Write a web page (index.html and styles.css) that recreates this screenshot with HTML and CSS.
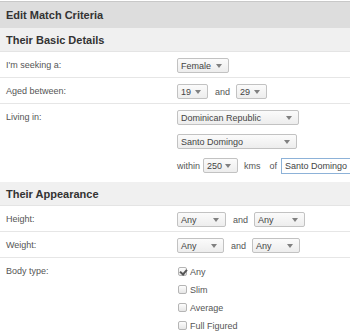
FILE: index.html
```html
<!DOCTYPE html>
<html lang="en">
<head>
    <meta charset="UTF-8">
    <title>Edit Match Criteria</title>
    <link rel="stylesheet" href="styles.css">
</head>
<body>
    <div class="panel">
        <div class="panel-title">Edit Match Criteria</div>

        <div class="section-title">Their Basic Details</div>
        <div class="row">
            <div class="label">I'm seeking a:</div>
            <div class="field">
                <div class="line"><span class="select w-female">Female</span></div>
            </div>
        </div>
        <div class="row">
            <div class="label">Aged between:</div>
            <div class="field">
                <div class="line">
                    <span class="select w-age">19</span>
                    <span class="word">and</span>
                    <span class="select w-age">29</span>
                </div>
            </div>
        </div>
        <div class="row row-last">
            <div class="label">Living in:</div>
            <div class="field">
                <div class="line"><span class="select w-country">Dominican Republic</span></div>
                <div class="line"><span class="select w-city">Santo Domingo</span></div>
                <div class="line">
                    <span class="word">within</span>
                    <span class="select w-dist">250</span>
                    <span class="word kms">kms</span>
                    <span class="word of">of</span>
                    <span class="text-input">Santo Domingo</span>
                </div>
            </div>
        </div>

        <div class="section-title">Their Appearance</div>
        <div class="row">
            <div class="label">Height:</div>
            <div class="field">
                <div class="line">
                    <span class="select w-any">Any</span>
                    <span class="word">and</span>
                    <span class="select w-any2">Any</span>
                </div>
            </div>
        </div>
        <div class="row">
            <div class="label">Weight:</div>
            <div class="field">
                <div class="line">
                    <span class="select w-any3">Any</span>
                    <span class="word">and</span>
                    <span class="select w-any4">Any</span>
                </div>
            </div>
        </div>
        <div class="row row-last">
            <div class="label">Body type:</div>
            <div class="field checks">
                <div class="check-item"><span class="checkbox checked"></span>Any</div>
                <div class="check-item"><span class="checkbox"></span>Slim</div>
                <div class="check-item"><span class="checkbox"></span>Average</div>
                <div class="check-item"><span class="checkbox"></span>Full Figured</div>
            </div>
        </div>
    </div>
</body>
</html>
```

FILE: styles.css
```css
* { margin: 0; padding: 0; box-sizing: border-box; }
body {
    font-family: "Liberation Sans", Arial, sans-serif;
    font-size: 9px;
    color: #555;
    background: white;
    overflow: hidden;
}
.panel { margin-top: 1px; border-top: 1px solid #c8c8c8; overflow: hidden; }
.panel-title {
    background: #dddddd;
    height: 26px;
    line-height: 26px;
    padding-left: 6px;
    font-size: 11px;
    font-weight: bold;
    color: #333;
}
.section-title {
    background: #f0f0f0;
    height: 24px;
    line-height: 24px;
    padding-left: 6px;
    font-size: 11px;
    font-weight: bold;
    color: #333;
    border-bottom: 1px solid #e4e4e4;
}
.row {
    display: flex;
    padding: 6px 0 4px 6px;
    border-bottom: 1px solid #e6e6e6;
}
.row-last { border-bottom: none; padding-bottom: 9px; }
.label { width: 171px; line-height: 15px; flex-shrink: 0; }
.field { display: flex; flex-direction: column; gap: 9px; min-width: 0; }
.line { display: flex; align-items: center; height: 15px; white-space: nowrap; }
.word { color: #555; margin: 0 6px 0 7px; }
.line .word:first-child { margin-left: 0; margin-right: 3px; }
.kms { margin: 0 0 0 6px; }
.of { margin: 0 4px 0 9px; }
.select {
    display: inline-flex;
    align-items: center;
    justify-content: space-between;
    flex-shrink: 0;
    height: 15px;
    padding: 0 6px 0 3px;
    border: 1px solid #c2c2c2;
    border-radius: 2px;
    background: linear-gradient(#fbfbfb, #ededed);
    color: #444;
    font-size: 9px;
}
.select::after {
    content: '';
    border-left: 3px solid transparent;
    border-right: 3px solid transparent;
    border-top: 4px solid #808080;
}
.w-female { width: 52px; }
.w-age { width: 31px; }
.w-country { width: 122px; }
.w-city { width: 120px; }
.w-dist { width: 35px; }
.w-any { width: 49px; }
.w-any2 { width: 51px; }
.w-any3 { width: 47px; }
.w-any4 { width: 48px; }
.text-input {
    display: inline-flex;
    align-items: center;
    flex-shrink: 0;
    height: 16px;
    width: 80px;
    padding-left: 3px;
    border: 1px solid #8db2d8;
    background: white;
    color: #444;
}
.checks { gap: 3px; }
.check-item {
    display: flex;
    align-items: center;
    height: 15px;
    color: #555;
    padding-left: 1px;
}
.checkbox {
    width: 9px;
    height: 9px;
    margin-right: 3px;
    border: 1px solid #b5b5b5;
    border-radius: 2px;
    background: linear-gradient(#fdfdfd, #e6e6e6);
    position: relative;
}
.checkbox.checked::after {
    content: '';
    position: absolute;
    left: 2px;
    top: 0px;
    width: 3px;
    height: 5px;
    border-right: 2px solid #555;
    border-bottom: 2px solid #555;
    transform: rotate(40deg);
}
```
